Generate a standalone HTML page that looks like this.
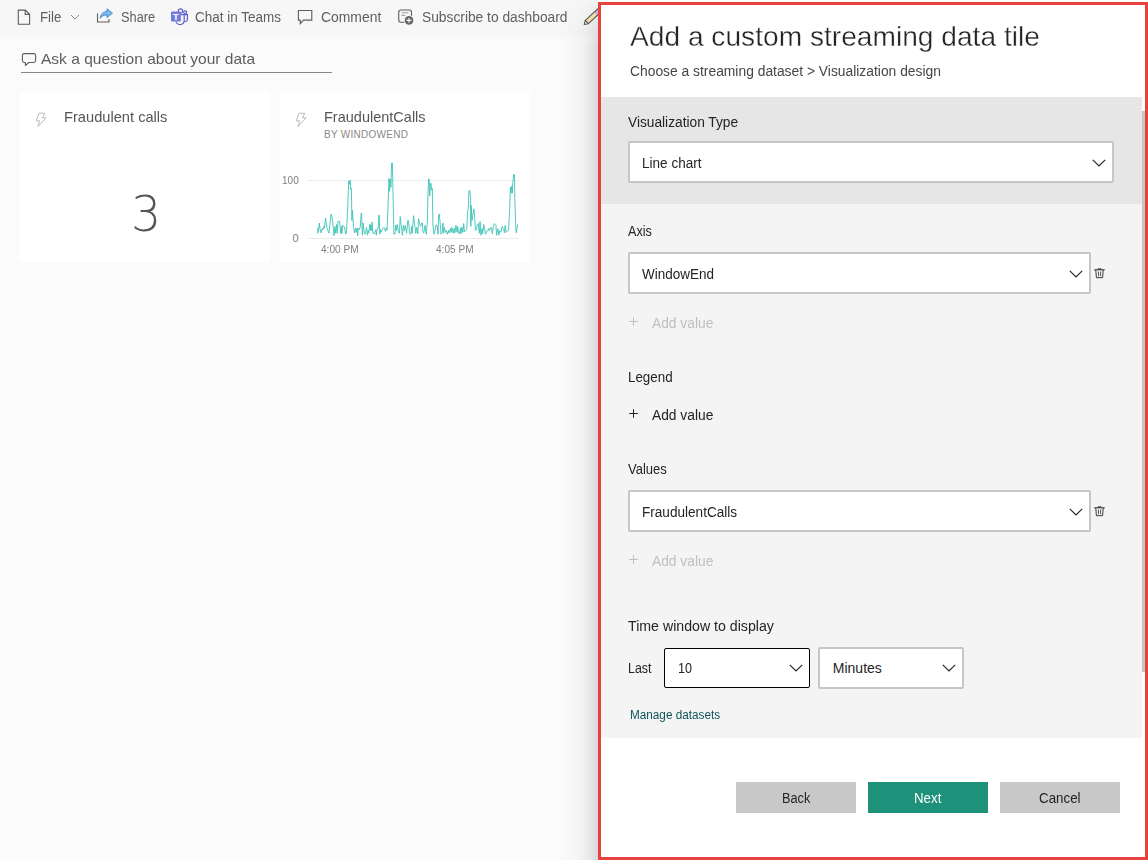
<!DOCTYPE html>
<html lang="en">
<head>
<meta charset="utf-8">
<title>Add a custom streaming data tile</title>
<style>
html,body{margin:0;padding:0;}
body{width:1148px;height:860px;overflow:hidden;position:relative;background:#fbfbfb;font-family:"Liberation Sans",sans-serif;color:#252423;}
.abs{position:absolute;}
.t{position:absolute;white-space:nowrap;line-height:1;transform-origin:0 0;}
#toolbar{left:0;top:0;width:598px;height:37px;background:#f7f7f7;}
.tb{font-size:14px;color:#605e5c;top:10px;}
#qa{font-size:15px;color:#605e5c;}
.tile{background:#fff;}
.tt{font-size:15px;color:#555;}
#shadow{left:558px;top:0;width:40px;height:860px;background:linear-gradient(to right,rgba(0,0,0,0) 0%,rgba(0,0,0,0.006) 20%,rgba(0,0,0,0.018) 42%,rgba(0,0,0,0.04) 62%,rgba(0,0,0,0.07) 78%,rgba(0,0,0,0.10) 90%,rgba(0,0,0,0.14) 100%);-webkit-mask-image:linear-gradient(to bottom,rgba(0,0,0,0.12) 0,rgba(0,0,0,0.55) 20px,#000 48px);mask-image:linear-gradient(to bottom,rgba(0,0,0,0.12) 0,rgba(0,0,0,0.55) 20px,#000 48px);}
#panel{left:598px;top:2px;width:544px;height:852px;border:3px solid #e8423f;background:#fff;}
#pbody{left:601px;top:97px;width:541px;height:641px;background:#f4f4f4;}
#vsec{left:601px;top:97px;width:541px;height:107px;background:#e6e6e6;}
#thumb{left:1142px;top:111px;width:3px;height:561px;background:#c6c6c6;}
.lab{font-size:14px;color:#252423;}
.sel{position:absolute;box-sizing:border-box;background:#fff;border:2px solid #c8c6c4;border-radius:2px;}
.sv{font-size:14px;color:#252423;}
.dis{color:#c0bfbe;}
.btn{position:absolute;height:31px;width:120px;top:782px;background:#c8c8c8;}
.ax{font-size:11px;color:#808080;}
.bt{font-size:14px;color:#252423;}
</style>
</head>
<body>
<!-- LEFT: dashboard -->
<div id="toolbar" class="abs"></div>
<div id="left">
<!-- toolbar icons -->
<svg class="abs" style="left:17px;top:9px" width="14" height="17" viewBox="0 0 14 17"><path d="M1.3 1.1h7.1l4.2 4.2v10H1.3z M8.2 1.2v4.2h4.3" fill="none" stroke="#605e5c" stroke-width="1.1"/></svg>
<span class="t tb" id="t_file" style="left:40px;transform:scaleX(0.948)">File</span>
<svg class="abs" style="left:70px;top:14px" width="10" height="6" viewBox="0 0 10 6"><path d="M1 1l4 4 4-4" fill="none" stroke="#8a8886" stroke-width="1"/></svg>
<svg class="abs" style="left:96px;top:8px" width="18" height="16" viewBox="0 0 18 16"><path d="M1.5 5.5v8.5h11.5v-3" fill="none" stroke="#605e5c" stroke-width="1.1"/><path d="M16.5 5.2L11 0.8v2.7C7 3.7 4.6 6.3 4.2 10.3c1.7-2.4 3.7-3.4 6.8-3.4v2.7z" fill="#82b8ec" stroke="#3f87d2" stroke-width="0.9" stroke-linejoin="round"/></svg>
<span class="t tb" id="t_share" style="left:121px;transform:scaleX(0.913)">Share</span>
<svg class="abs" style="left:170px;top:8px" width="19" height="18" viewBox="0 0 19 18"><g fill="none" stroke="#5b5fc7" stroke-width="1.2"><circle cx="10.5" cy="3" r="2.2"/><circle cx="15.2" cy="4.3" r="1.5"/><path d="M10.9 6.6H14.2V12.3A4.3 4.3 0 0 1 6 14.1"/><path d="M14.6 6.6H17.4V11.2A2.6 2.6 0 0 1 14.4 13.7"/></g><rect x="1" y="3.4" width="9.9" height="10.2" rx="0.8" fill="#7479dc"/><text x="5.95" y="11.9" font-family="Liberation Sans,sans-serif" font-size="9.3" font-weight="bold" fill="#fff" text-anchor="middle">T</text></svg>
<span class="t tb" id="t_chat" style="left:195px;transform:scaleX(0.964)">Chat in Teams</span>
<svg class="abs" style="left:297px;top:9px" width="16" height="16" viewBox="0 0 16 16"><path d="M1.4 1.5h13.4v9.6h-8.3l-3.2 3.6v-3.6h-1.9z" fill="none" stroke="#605e5c" stroke-width="1.1"/></svg>
<span class="t tb" id="t_comment" style="left:321px;transform:scaleX(0.993)">Comment</span>
<svg class="abs" style="left:397px;top:9px" width="18" height="17" viewBox="0 0 18 17"><rect x="1.7" y="1" width="12.8" height="12.2" rx="2.2" fill="none" stroke="#605e5c" stroke-width="1.1"/><path d="M4.6 3.8h6.7M4.6 6.4h3.6" stroke="#a19f9d" stroke-width="1.1"/><circle cx="12" cy="11.4" r="5.1" fill="#f7f7f7"/><circle cx="12" cy="11.4" r="4.3" fill="#666"/><path d="M12 9v4.8M9.6 11.4h4.8" stroke="#fff" stroke-width="1.1"/></svg>
<span class="t tb" id="t_sub" style="left:422px;transform:scaleX(0.984)">Subscribe to dashboard</span>

<!-- Q&A -->
<svg class="abs" style="left:21px;top:52px" width="16" height="15" viewBox="21 52 16 15"><path d="M24.3 53.6h9.4a1.9 1.9 0 0 1 1.9 1.9v5.1a1.9 1.9 0 0 1-1.9 1.9h-4.9l-3.4 3v-3h-1.1a1.9 1.9 0 0 1-1.9-1.9v-5.1a1.9 1.9 0 0 1 1.9-1.9z" fill="none" stroke="#605e5c" stroke-width="1.1" stroke-linejoin="round"/></svg>
<span class="t" id="qa" style="left:41px;top:51.2px;font-size:15px;transform:scaleX(1.035)">Ask a question about your data</span>
<div class="abs" style="left:21px;top:72px;width:310.5px;height:1px;background:#8a8886"></div>
<!-- tile 1 -->
<div class="abs tile" style="left:20px;top:92px;width:250px;height:170px"></div>
<svg class="abs bolt" style="left:35px;top:112px" width="12" height="16" viewBox="0 0 12 16"><path d="M4 1.2h5.8l-2.3 4.6h3.6L3 14.6l1.6-5.8H1.3z" fill="none" stroke="#bdbbb8" stroke-width="1" stroke-linejoin="round"/></svg>
<span class="t tt" id="t_t1" style="left:64px;top:108.7px;transform:scaleX(0.977)">Fraudulent calls</span>
<span class="t" id="t_big" style="left:130.8px;top:190.3px;font-size:49.5px;color:#555;font-family:'DejaVu Sans Light','DejaVu Sans',sans-serif;font-weight:200;transform:scaleX(0.96)">3</span>
<!-- tile 2 -->
<div class="abs tile" style="left:280px;top:92px;width:250px;height:170px"></div>
<svg class="abs bolt" style="left:295px;top:112px" width="12" height="16" viewBox="0 0 12 16"><path d="M4 1.2h5.8l-2.3 4.6h3.6L3 14.6l1.6-5.8H1.3z" fill="none" stroke="#bdbbb8" stroke-width="1" stroke-linejoin="round"/></svg>
<span class="t tt" id="t_t2" style="left:324px;top:108.7px;transform:scaleX(0.967)">FraudulentCalls</span>
<span class="t" id="t_by" style="left:324px;top:130px;font-size:10px;color:#8a8886;letter-spacing:0.28px">BY WINDOWEND</span>
<span class="t ax" id="t_100" style="left:281.5px;top:175.3px;transform:scaleX(0.91)">100</span>
<span class="t ax" id="t_0" style="left:292.5px;top:233px">0</span>
<span class="t ax" id="t_4a" style="left:320.5px;top:243.7px;transform:scaleX(0.917)">4:00 PM</span>
<span class="t ax" id="t_4b" style="left:436.3px;top:243.7px;transform:scaleX(0.917)">4:05 PM</span>
<svg class="abs" style="left:0;top:0" width="598" height="270" viewBox="0 0 598 270"><path d="M308 180.5H518.5M308 238.5H518.5" stroke="#eaeaea" stroke-width="1" fill="none"/><path d="M317.4 228.4 L317.7 228.2 L317.9 233.2 L319.4 223.0 L319.9 228.4 L321.0 232.8 L322.3 228.4 L323.0 229.8 L324.3 225.9 L324.6 227.9 L325.5 218.1 L327.2 228.4 L328.9 233.2 L331.1 214.2 L331.9 216.6 L333.1 225.4 L334.0 235.7 L335.0 226.4 L335.7 233.2 L336.7 224.5 L337.3 233.2 L337.9 221.5 L339.6 221.3 L340.6 233.2 L341.4 226.4 L341.9 233.7 L342.5 225.4 L344.5 226.9 L345.5 234.2 L346.4 233.2 L347.7 206.9 L348.7 181.0 L349.2 184.4 L350.2 180.0 L350.7 189.3 L351.4 188.3 L351.9 220.5 L352.4 210.3 L353.6 227.4 L354.6 232.8 L355.5 228.4 L356.2 232.3 L357.0 227.9 L357.7 235.7 L358.2 228.4 L359.4 229.8 L360.4 226.4 L361.1 213.2 L361.6 213.2 L362.4 235.2 L363.2 223.0 L364.3 233.2 L365.3 234.2 L366.5 227.4 L367.5 235.2 L368.2 230.3 L368.9 232.8 L369.7 224.5 L370.4 230.3 L370.9 224.5 L371.7 230.8 L372.1 222.0 L372.8 233.2 L374.3 233.7 L375.8 229.8 L376.3 235.2 L377.2 228.8 L378.2 228.4 L378.7 215.2 L379.3 215.2 L379.7 234.2 L380.5 229.8 L381.1 232.3 L382.6 228.8 L384.1 227.4 L385.5 231.3 L386.3 227.9 L387.0 230.3 L388.0 206.9 L389.0 178.5 L389.5 191.2 L390.4 179.0 L390.9 187.3 L391.6 162.9 L392.4 162.9 L392.9 187.3 L393.9 234.2 L394.8 234.2 L395.8 224.9 L396.5 230.3 L397.3 224.5 L398.2 231.3 L399.4 233.2 L400.2 216.6 L401.2 225.4 L402.4 235.2 L403.4 225.4 L404.3 230.8 L405.3 225.4 L406.6 233.2 L407.8 220.5 L408.5 220.5 L409.5 233.2 L411.0 234.2 L411.6 226.4 L412.2 233.2 L413.6 215.7 L414.9 226.4 L415.8 233.2 L416.6 227.4 L417.8 233.7 L418.5 218.6 L419.7 224.5 L420.7 226.4 L421.7 223.0 L422.4 223.0 L422.9 232.3 L423.9 232.8 L425.0 225.4 L426.3 234.2 L427.3 222.5 L427.8 200.0 L428.6 179.0 L429.2 179.0 L429.7 196.1 L430.5 183.4 L431.2 183.4 L431.5 190.2 L432.3 188.3 L432.9 225.4 L434.1 234.2 L435.1 230.3 L436.1 224.9 L437.1 225.4 L438.0 234.2 L438.7 214.2 L439.3 214.2 L440.3 224.5 L441.0 234.2 L442.2 232.3 L442.9 223.0 L443.6 233.2 L444.4 227.4 L445.4 232.3 L446.3 230.8 L447.3 234.2 L448.5 230.3 L449.3 233.2 L450.4 228.4 L451.2 232.3 L452.0 227.4 L453.2 233.2 L454.2 228.4 L454.9 232.8 L455.9 225.4 L457.1 232.3 L457.6 226.4 L458.6 233.2 L459.5 233.7 L460.5 227.9 L461.0 233.7 L462.0 226.9 L462.8 232.3 L463.7 223.5 L464.4 231.8 L465.9 230.3 L466.9 228.4 L467.6 211.3 L468.3 208.8 L468.8 191.2 L469.6 190.2 L470.6 197.1 L470.8 226.4 L471.2 205.4 L472.0 220.5 L472.7 215.7 L473.9 208.8 L474.7 217.6 L475.4 230.3 L476.4 229.8 L477.3 224.5 L478.3 223.5 L479.3 233.2 L480.1 221.5 L480.9 235.2 L482.2 228.4 L482.7 233.7 L483.7 224.5 L484.7 229.3 L485.6 234.2 L486.6 231.3 L487.6 230.8 L488.8 228.4 L489.5 230.8 L490.5 227.4 L491.5 227.9 L492.3 233.7 L493.3 226.4 L494.4 223.5 L495.9 225.4 L496.6 235.2 L497.9 228.8 L498.8 235.2 L499.8 230.8 L500.8 232.3 L502.2 226.4 L503.7 228.4 L504.4 232.8 L505.2 225.4 L506.2 232.3 L507.6 230.8 L508.6 230.3 L509.6 210.8 L510.4 187.3 L511.0 193.2 L511.8 185.9 L512.3 193.2 L513.0 180.5 L513.6 174.6 L514.5 174.6 L514.8 197.1 L515.9 230.3 L516.4 232.8 L517.1 228.4 L517.6 224.5" fill="none" stroke="#3ec3b8" stroke-width="0.9" stroke-linejoin="round"/></svg>
</div>

<!-- RIGHT: panel -->
<div id="shadow" class="abs"></div>
<svg class="abs" style="left:578px;top:0" width="24" height="32" viewBox="578 0 24 32"><path d="M584.2 24.5L588.4 23.7L601.9 11.2L598.8 7.9L585.3 20.4Z" fill="#f1dca3"/><path d="M584.2 24.5L588.4 23.7L585.3 20.4Z" fill="#fff"/><path d="M597.1 15.6L601.9 11.2L598.8 7.9L594 12.3Z" fill="#d3a6e3"/><path d="M584.2 24.5L588.4 23.7L601.9 11.2L598.8 7.9L585.3 20.4ZM585.3 20.4L588.4 23.7" fill="none" stroke="#555" stroke-width="1.1" stroke-linejoin="round"/></svg>
<div class="abs" style="left:598px;top:0;width:550px;height:2px;background:#fff"></div>
<div id="panel" class="abs"></div>
<div id="pbody" class="abs"></div>
<div id="vsec" class="abs"></div>
<div id="thumb" class="abs"></div>
<div id="right">
<span class="t" id="r_title" style="left:630px;top:22.5px;font-size:27.6px;color:#252423;transform:scaleX(1.02);-webkit-text-stroke:0.35px #fff">Add a custom streaming data tile</span>
<span class="t" id="r_sub" style="left:630.3px;top:65.3px;font-size:13.8px;color:#484644;transform:scaleX(1.003)">Choose a streaming dataset &gt; Visualization design</span>
<span class="t lab" id="r_vt" style="left:628.3px;top:115.45px;transform:scaleX(0.98)">Visualization Type</span>
<div class="sel" style="left:628px;top:141px;width:486px;height:42px"></div>
<span class="t sv" id="r_lc" style="left:642.3px;top:156.25px;transform:scaleX(0.968)">Line chart</span>
<svg class="abs" style="left:1092px;top:159px" width="14" height="8" viewBox="0 0 14 8"><path d="M0.8 0.8l6.2 6.2 6.2-6.2" fill="none" stroke="#252423" stroke-width="1.2"/></svg>
<span class="t lab" id="r_axis" style="left:628.4px;top:224.35px;transform:scaleX(0.9)">Axis</span>
<div class="sel" style="left:628px;top:252px;width:463px;height:42px"></div>
<span class="t sv" id="r_we" style="left:642.3px;top:266.95px;transform:scaleX(0.963)">WindowEnd</span>
<svg class="abs" style="left:1069px;top:270px" width="14" height="8" viewBox="0 0 14 8"><path d="M0.8 0.8l6.2 6.2 6.2-6.2" fill="none" stroke="#252423" stroke-width="1.2"/></svg>
<svg class="abs" style="left:1094px;top:267.5px" width="11" height="11" viewBox="0 0 11 11"><path d="M0.2 1.8h10.6M3.9 1.6V0.9h3.2v0.7" fill="none" stroke="#252423" stroke-width="0.95"/><path d="M1.8 2l0.6 7.7h6.2l0.6-7.7" fill="none" stroke="#252423" stroke-width="0.9"/><path d="M4.5 3.5v4.7M6.6 3.5v4.7" stroke="#252423" stroke-width="0.75"/></svg>
<svg class="abs" style="left:629px;top:317px" width="9" height="9" viewBox="0 0 9 9"><path d="M4.5 0.2v8.6M0.2 4.5h8.6" stroke="#c0bfbe" stroke-width="1"/></svg>
<span class="t sv dis" id="r_av1" style="left:652.3px;top:316.05px;transform:scaleX(0.985)">Add value</span>
<span class="t lab" id="r_leg" style="left:628.3px;top:369.95px;transform:scaleX(0.955)">Legend</span>
<svg class="abs" style="left:629px;top:409px" width="9" height="9" viewBox="0 0 9 9"><path d="M4.5 0.2v8.6M0.2 4.5h8.6" stroke="#252423" stroke-width="1"/></svg>
<span class="t sv" id="r_av2" style="left:652.3px;top:408.05px;transform:scaleX(0.985)">Add value</span>
<span class="t lab" id="r_val" style="left:628.3px;top:461.8px;transform:scaleX(0.93)">Values</span>
<div class="sel" style="left:628px;top:490px;width:463px;height:42px"></div>
<span class="t sv" id="r_fc" style="left:642px;top:505.05px;transform:scaleX(0.97)">FraudulentCalls</span>
<svg class="abs" style="left:1069px;top:508px" width="14" height="8" viewBox="0 0 14 8"><path d="M0.8 0.8l6.2 6.2 6.2-6.2" fill="none" stroke="#252423" stroke-width="1.2"/></svg>
<svg class="abs" style="left:1094px;top:505.5px" width="11" height="11" viewBox="0 0 11 11"><path d="M0.2 1.8h10.6M3.9 1.6V0.9h3.2v0.7" fill="none" stroke="#252423" stroke-width="0.95"/><path d="M1.8 2l0.6 7.7h6.2l0.6-7.7" fill="none" stroke="#252423" stroke-width="0.9"/><path d="M4.5 3.5v4.7M6.6 3.5v4.7" stroke="#252423" stroke-width="0.75"/></svg>
<svg class="abs" style="left:629px;top:555px" width="9" height="9" viewBox="0 0 9 9"><path d="M4.5 0.2v8.6M0.2 4.5h8.6" stroke="#c0bfbe" stroke-width="1"/></svg>
<span class="t sv dis" id="r_av3" style="left:652.3px;top:554.25px;transform:scaleX(0.985)">Add value</span>
<span class="t lab" id="r_tw" style="left:628.2px;top:619.25px;transform:scaleX(1.012)">Time window to display</span>
<span class="t lab" id="r_last" style="left:628.4px;top:661.25px;transform:scaleX(0.885)">Last</span>
<div class="sel" style="left:664px;top:648px;width:146px;height:40px;border:1px solid #000;border-radius:2px"></div>
<span class="t sv" id="r_10" style="left:677.5px;top:660.9px;transform:scaleX(0.9)">10</span>
<svg class="abs" style="left:789px;top:664px" width="14" height="8" viewBox="0 0 14 8"><path d="M0.8 0.8l6.2 6.2 6.2-6.2" fill="none" stroke="#252423" stroke-width="1.2"/></svg>
<div class="sel" style="left:818px;top:647px;width:146px;height:42px"></div>
<span class="t sv" id="r_min" style="left:832.8px;top:660.9px;transform:scaleX(1.0)">Minutes</span>
<svg class="abs" style="left:942px;top:664px" width="14" height="8" viewBox="0 0 14 8"><path d="M0.8 0.8l6.2 6.2 6.2-6.2" fill="none" stroke="#252423" stroke-width="1.2"/></svg>
<span class="t" id="r_md" style="left:630.2px;top:709px;font-size:12px;color:#0f5257;transform:scaleX(0.978)">Manage datasets</span>
<div class="btn" style="left:736px"></div>
<div class="btn" style="left:868px;background:#1e917a"></div>
<div class="btn" style="left:1000px"></div>
<span class="t bt" id="r_back" style="left:782.2px;top:791.25px;transform:scaleX(0.91)">Back</span>
<span class="t bt" id="r_next" style="left:914px;top:791.25px;color:#fff;transform:scaleX(0.95)">Next</span>
<span class="t bt" id="r_cancel" style="left:1039.3px;top:791.25px;transform:scaleX(0.953)">Cancel</span>
</div>
</body>
</html>
